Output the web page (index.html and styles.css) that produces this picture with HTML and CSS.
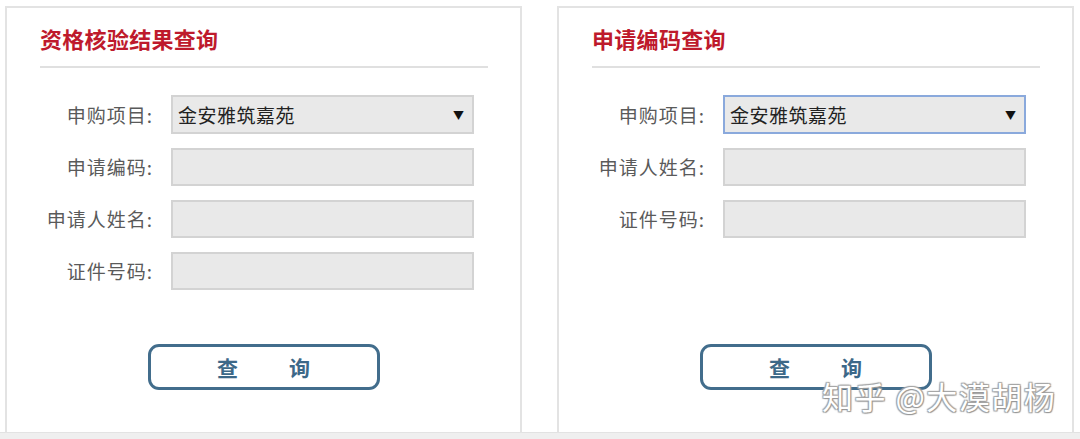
FILE: index.html
```html
<!DOCTYPE html>
<html lang="zh-CN">
<head>
<meta charset="utf-8">
<title>查询</title>
<link rel="stylesheet" href="styles.css">
</head>
<body>
<div class="page">
  <section class="panel">
    <h2 class="title">资格核验结果查询</h2>
    <div class="divider"></div>
    <div class="form">
      <label class="label">申购项目:</label>
      <div class="select"><span>金安雅筑嘉苑</span><span class="arrow">▼</span></div>
      <label class="label">申请编码:</label>
      <div class="input"></div>
      <label class="label">申请人姓名:</label>
      <div class="input"></div>
      <label class="label">证件号码:</label>
      <div class="input"></div>
    </div>
    <button class="btn"><span>查</span><span>询</span></button>
  </section>
  <section class="panel">
    <h2 class="title">申请编码查询</h2>
    <div class="divider"></div>
    <div class="form">
      <label class="label">申购项目:</label>
      <div class="select focus"><span>金安雅筑嘉苑</span><span class="arrow">▼</span></div>
      <label class="label">申请人姓名:</label>
      <div class="input"></div>
      <label class="label">证件号码:</label>
      <div class="input"></div>
    </div>
    <button class="btn"><span>查</span><span>询</span></button>
    <div class="watermark">知乎 @大漠胡杨</div>
  </section>
</div>
</body>
</html>
```
FILE: styles.css
```css
html, body {
  margin: 0;
  padding: 0;
}
body {
  background: #efefef;
  width: 1080px;
  height: 439px;
  overflow: hidden;
  font-family: "Noto Sans CJK SC", "Noto Sans", sans-serif;
}
.page {
  display: flex;
  gap: 35px;
  padding: 6px 0 0 5px;
  height: 433px;
  box-sizing: border-box;
  background: #fff;
  border-bottom: 1px solid #e2e2e2;
}
.panel {
  position: relative;
  width: 517px;
  height: 427px;
  box-sizing: border-box;
  border: 2px solid #e3e3e3;
  border-bottom-width: 1px;
  background: #fff;
  display: flex;
  flex-direction: column;
}
.title {
  margin: 15px 0 0 33px;
  font-size: 22px;
  line-height: 30px;
  font-weight: bold;
  color: #be1a2c;
  letter-spacing: 0.3px;
}
.divider {
  margin: 13px 32px 0 33px;
  height: 2px;
  background: #e0e0e0;
}
.form {
  margin-top: 27px;
  display: grid;
  grid-template-columns: 145px 303px;
  column-gap: 19px;
  row-gap: 14px;
  align-items: center;
}
.label {
  text-align: right;
  font-size: 19px;
  letter-spacing: 1px;
  color: #5a5a5a;
  line-height: 24px;
  margin-right: -1px;
}
.select, .input {
  box-sizing: border-box;
  height: 38px;
  background: #e9e9e9;
  border: 2px solid #d3d3d3;
}
.select {
  height: 39px;
  display: flex;
  align-items: center;
  justify-content: space-between;
  padding: 0 8px 0 5px;
  font-size: 19px;
  letter-spacing: 0.5px;
  color: #222;
}
.select.focus {
  border-color: #8aa9dc;
}
.arrow {
  font-size: 11px;
  letter-spacing: 0;
  color: #111;
}
.btn {
  margin: auto auto 42px;
  width: 232px;
  height: 46px;
  box-sizing: border-box;
  border: 3px solid #426d8c;
  border-radius: 11px;
  background: #fff;
  display: flex;
  justify-content: center;
  align-items: center;
  gap: 51px;
  font-family: "Noto Sans CJK SC", sans-serif;
  font-size: 21px;
  font-weight: bold;
  color: #3d6888;
  padding: 0;
}
.watermark {
  position: absolute;
  left: 263px;
  top: 365px;
  font-size: 31px;
  letter-spacing: 1.5px;
  color: #fff;
  white-space: nowrap;
  text-shadow: 0 0 1px #888, 1px 1px 1px #999, -1px -1px 1px #aaa, 1px -1px 1px #aaa, -1px 1px 1px #aaa;
}
```
